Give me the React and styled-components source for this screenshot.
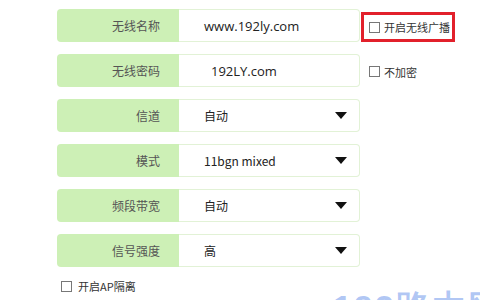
import React from 'react'
import styled, { createGlobalStyle } from 'styled-components'

const GlobalStyle = createGlobalStyle`
  html, body {
    margin: 0;
    padding: 0;
    background: #fff;
  }
  body {
    font-family: "Microsoft YaHei", "Noto Sans CJK SC", "Noto Sans", sans-serif;
    width: 480px;
    height: 300px;
    overflow: hidden;
  }
`

const Page = styled.div`
  position: relative;
  width: 480px;
  height: 300px;
  overflow: hidden;
  padding: 9px 0 0 57px;
  box-sizing: border-box;
`

const Form = styled.div`
  display: flex;
  flex-direction: column;
  gap: 12px;
`

const Row = styled.div`
  display: flex;
  align-items: flex-start;
  height: 33px;
`

const Label = styled.div`
  width: 122px;
  height: 33px;
  box-sizing: border-box;
  background: #cdf0b6;
  border-radius: 4px 0 0 4px;
  display: flex;
  align-items: center;
  justify-content: flex-end;
  padding-right: 19px;
  font-size: 12px;
  color: #555;
`

const Field = styled.div`
  width: 181px;
  height: 33px;
  box-sizing: border-box;
  border: 1px solid #e2f2d6;
  border-left: none;
  border-radius: 0 4px 4px 0;
  display: flex;
  align-items: center;
  padding-left: ${p => p.$indent || 25}px;
  padding-right: 12px;
  font-size: ${p => (p.$big ? 13 : 12)}px;
  font-family: ${p => (p.$big ? '"Open Sans", "Noto Sans", sans-serif' : '"Noto Sans CJK SC", sans-serif')};
  color: #222;
`

const Value = styled.span`
  flex: 1;
`

const Arrow = styled.span`
  width: 0;
  height: 0;
  border-left: 6px solid transparent;
  border-right: 6px solid transparent;
  border-top: 7px solid #111;
`

const Aside = styled.label`
  display: flex;
  align-items: center;
  gap: 4px;
  margin-left: ${p => (p.$boxed ? 1 : 9)}px;
  margin-top: ${p => (p.$boxed ? 3 : 12)}px;
  height: ${p => (p.$boxed ? 30 : 11)}px;
  box-sizing: border-box;
  padding-left: ${p => (p.$boxed ? 5 : 0)}px;
  width: ${p => (p.$boxed ? '94px' : 'auto')};
  border: ${p => (p.$boxed ? '3px solid #e2202b' : 'none')};
  font-size: 11px;
  color: #333;
`

const Box = styled.span`
  width: 9px;
  height: 9px;
  border: 1px solid #777;
  background: #fff;
  flex-shrink: 0;
`

const Footer = styled.label`
  display: flex;
  align-items: center;
  gap: 6px;
  margin-top: 11px;
  margin-left: 4px;
  font-size: 11px;
  color: #333;
`

const Watermark = styled.div`
  position: absolute;
  left: 333px;
  top: 285px;
  font-family: "Liberation Sans", Arial, sans-serif;
  font-size: 34px;
  font-weight: bold;
  letter-spacing: 2px;
  color: rgba(110, 150, 235, 0.55);
  white-space: nowrap;
`

const rows = [
  { label: '无线名称', value: 'www.192ly.com', big: true, indent: 25, aside: { text: '开启无线广播', boxed: true } },
  { label: '无线密码', value: '192LY.com', big: true, indent: 32, aside: { text: '不加密' } },
  { label: '信道', value: '自动', select: true },
  { label: '模式', value: '11bgn mixed', select: true },
  { label: '频段带宽', value: '自动', select: true },
  { label: '信号强度', value: '高', select: true },
]

export default function App() {
  return (
    <Page>
      <GlobalStyle />
      <Form>
        {rows.map(r => (
          <Row key={r.label}>
            <Label>{r.label}</Label>
            <Field $big={r.big} $indent={r.indent}>
              <Value>{r.value}</Value>
              {r.select && <Arrow />}
            </Field>
            {r.aside && (
              <Aside $boxed={r.aside.boxed}>
                <Box />
                {r.aside.text}
              </Aside>
            )}
          </Row>
        ))}
      </Form>
      <Footer>
        <Box />
        开启AP隔离
      </Footer>
      <Watermark>192路由网</Watermark>
    </Page>
  )
}
